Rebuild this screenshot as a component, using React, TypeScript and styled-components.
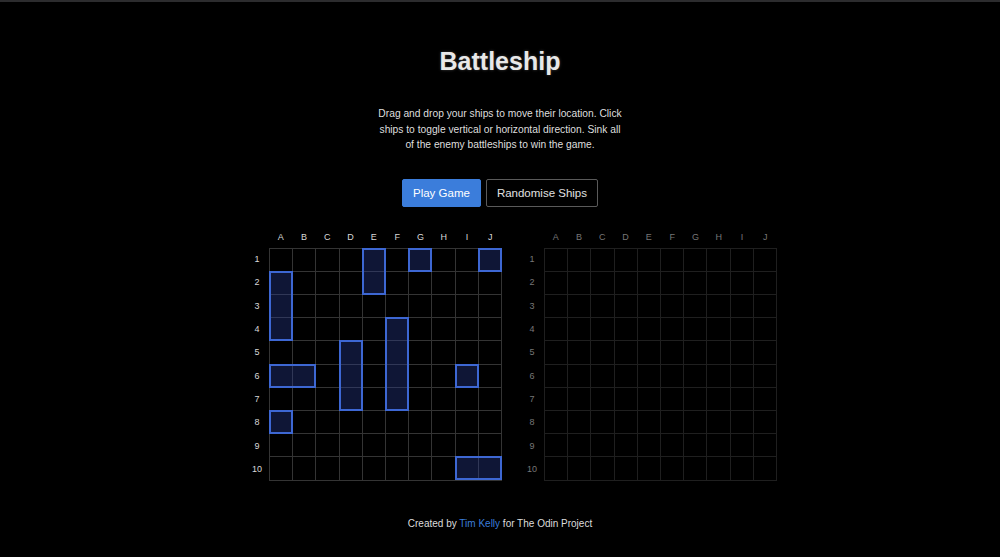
import styled, { createGlobalStyle } from "styled-components";

const GlobalStyle = createGlobalStyle`
  html, body {
    margin: 0;
    padding: 0;
    background: #000;
  }
  body {
    font-family: "Liberation Sans", Arial, sans-serif;
    color: #e6e6e6;
  }
`;

const Page = styled.div`
  min-height: 557px;
  box-sizing: border-box;
  border-top: 2px solid #2c2c2e;
  display: flex;
  flex-direction: column;
  align-items: center;
  padding-top: 43px;
`;

const Title = styled.h1`
  margin: 0;
  font-size: 25px;
  line-height: 32px;
  font-weight: 700;
  color: #e8e8e8;
  text-shadow: 0 0 3px rgba(255, 255, 255, 0.25);
`;

const Intro = styled.p`
  margin: 29px 0 0;
  max-width: 249px;
  font-size: 10.25px;
  line-height: 15.5px;
  text-align: center;
  color: #dedede;
`;

const Buttons = styled.div`
  display: flex;
  gap: 5px;
  margin-top: 26px;
`;

const Button = styled.button<{ $primary?: boolean }>`
  height: 28px;
  padding: 0 10px;
  font-family: inherit;
  font-size: 11.5px;
  border-radius: 2px;
  cursor: pointer;
  color: ${(p) => (p.$primary ? "#fff" : "#e0e0e0")};
  background: ${(p) => (p.$primary ? "#3b7ddb" : "#000")};
  border: 1px solid ${(p) => (p.$primary ? "#3b7ddb" : "#5a5a5a")};
`;

const Boards = styled.div`
  display: flex;
  gap: 18px;
  margin-top: 19px;
  padding-left: 22px;
`;

const Board = styled.div<{ $dim?: boolean }>`
  display: grid;
  grid-template-columns: 24px 233px;
  grid-template-rows: 22px 233px;
  color: ${(p) => (p.$dim ? "#777" : "#d8d8d8")};
  font-size: 9px;
`;

const ColLabels = styled.div`
  grid-column: 2;
  display: grid;
  grid-template-columns: repeat(10, 1fr);
  align-items: center;
  text-align: center;
`;

const RowLabels = styled.div`
  grid-column: 1;
  grid-row: 2;
  display: grid;
  grid-template-rows: repeat(10, 1fr);
  align-items: center;
  text-align: center;
`;

const GridWrap = styled.div`
  grid-column: 2;
  grid-row: 2;
  position: relative;
`;

const Cells = styled.div<{ $dim?: boolean }>`
  width: 100%;
  height: 100%;
  box-sizing: border-box;
  display: grid;
  grid-template-columns: repeat(10, 1fr);
  grid-template-rows: repeat(10, 1fr);
  gap: 1px;
  padding: 1px;
  background: ${(p) => (p.$dim ? "#1f1f1f" : "#343434")};
`;

const Cell = styled.div`
  background: #000;
`;

const Ship = styled.div`
  position: absolute;
  box-sizing: border-box;
  border: 2px solid #3d67d3;
  background: rgba(42, 62, 150, 0.36);
`;

const Footer = styled.footer`
  margin-top: 36px;
  font-size: 10px;
  line-height: 14px;
  color: #dcdcdc;
  a {
    color: #3b7ddb;
    text-decoration: none;
  }
`;

const letters = ["A", "B", "C", "D", "E", "F", "G", "H", "I", "J"];
const numbers = Array.from({ length: 10 }, (_, i) => i + 1);

type ShipData = { col: number; row: number; len: number; vertical: boolean };

const ships: ShipData[] = [
  { col: 4, row: 0, len: 2, vertical: true },
  { col: 6, row: 0, len: 1, vertical: false },
  { col: 9, row: 0, len: 1, vertical: false },
  { col: 0, row: 1, len: 3, vertical: true },
  { col: 5, row: 3, len: 4, vertical: true },
  { col: 3, row: 4, len: 3, vertical: true },
  { col: 0, row: 5, len: 2, vertical: false },
  { col: 8, row: 5, len: 1, vertical: false },
  { col: 0, row: 7, len: 1, vertical: false },
  { col: 8, row: 9, len: 2, vertical: false },
];

const GameBoard: React.FC<{ dim?: boolean; fleet?: ShipData[] }> = ({ dim, fleet = [] }) => {
  const pitch = 23.2;
  return (
    <Board $dim={dim}>
      <ColLabels>
        {letters.map((l) => (
          <span key={l}>{l}</span>
        ))}
      </ColLabels>
      <RowLabels>
        {numbers.map((n) => (
          <span key={n}>{n}</span>
        ))}
      </RowLabels>
      <GridWrap>
        <Cells $dim={dim}>
          {Array.from({ length: 100 }, (_, i) => (
            <Cell key={i} />
          ))}
        </Cells>
        {fleet.map((s, i) => (
          <Ship
            key={i}
            style={{
              left: s.col * pitch,
              top: s.row * pitch,
              width: (s.vertical ? 1 : s.len) * pitch + 1,
              height: (s.vertical ? s.len : 1) * pitch + 1,
            }}
          />
        ))}
      </GridWrap>
    </Board>
  );
};

const App: React.FC = () => {
  return (
    <>
      <GlobalStyle />
      <Page>
        <Title>Battleship</Title>
        <Intro>
          Drag and drop your ships to move their location. Click ships to toggle vertical or
          horizontal direction. Sink all of the enemy battleships to win the game.
        </Intro>
        <Buttons>
          <Button $primary>Play Game</Button>
          <Button>Randomise Ships</Button>
        </Buttons>
        <Boards>
          <GameBoard fleet={ships} />
          <GameBoard dim />
        </Boards>
        <Footer>
          Created by <a href="#">Tim Kelly</a> for The Odin Project
        </Footer>
      </Page>
    </>
  );
};

export default App;
